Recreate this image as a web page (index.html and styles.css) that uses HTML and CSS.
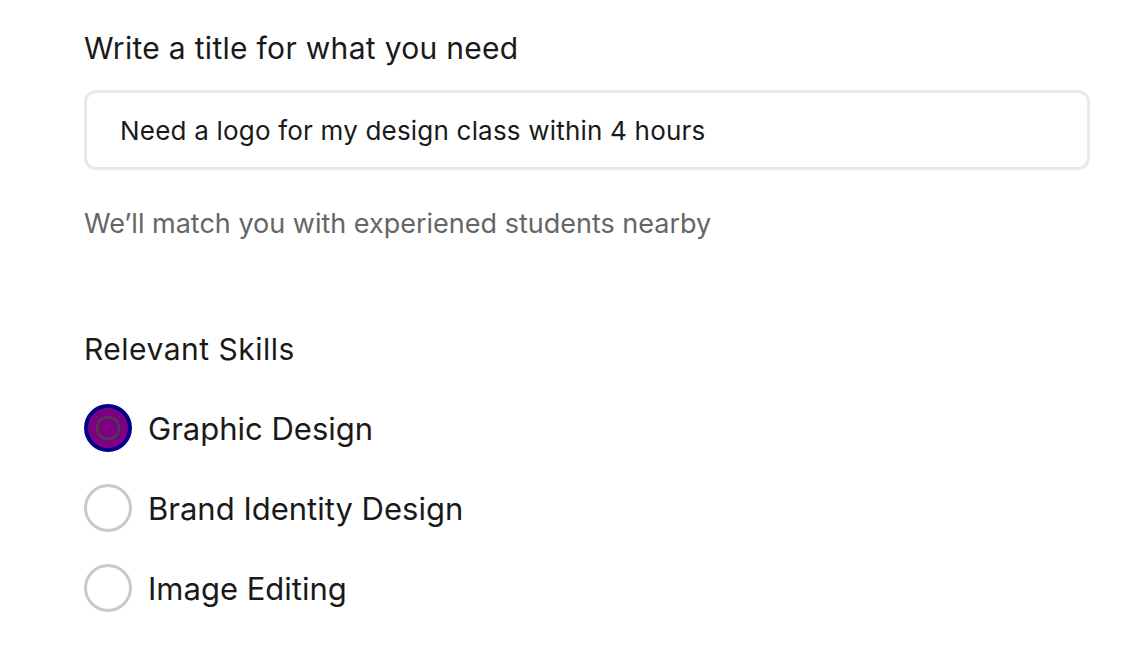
FILE: index.html
```html
<!DOCTYPE html>
<html lang="en">
<head>
    <meta charset="UTF-8">
    <meta name="viewport" content="width=device-width, initial-scale=1.0">
    <title>Post a request</title>
    <link rel="stylesheet" href="styles.css">
</head>
<body>
    <div class="request-form">
        <!-- Title -->
        <h2 class="field-label">Write a title for what you need</h2>
        <input type="text" class="title-input" value="Need a logo for my design class within 4 hours">
        <p class="field-hint">We’ll match you with experiened students nearby</p>

        <!-- Skills -->
        <h2 class="field-label skills-label">Relevant Skills</h2>
        <div class="skill-list">
            <label class="skill-option">
                <span class="radio checked"><span class="radio-dot"></span></span>
                Graphic Design
            </label>
            <label class="skill-option">
                <span class="radio"></span>
                Brand Identity Design
            </label>
            <label class="skill-option">
                <span class="radio"></span>
                Image Editing
            </label>
        </div>
    </div>
</body>
</html>
```

FILE: styles.css
```css
body {
    margin: 0;
    font-family: Inter, 'Liberation Sans', Arial, sans-serif;
    background-color: #fff;
    color: #1a1a1a;
}

.request-form {
    padding: 31px 54px 0 84px;
}

.field-label {
    margin: 0;
    font-size: 30px;
    font-weight: 400;
    line-height: 34px;
    letter-spacing: 0.3px;
}

.title-input {
    display: block;
    width: 100%;
    height: 80px;
    box-sizing: border-box;
    margin-top: 25px;
    padding: 0 33px;
    border: 3px solid #e9e9e9;
    border-radius: 12px;
    font-family: inherit;
    font-size: 26px;
    letter-spacing: 0.2px;
    color: #1a1a1a;
    outline: none;
}

.field-hint {
    margin: 37px 0 0;
    font-size: 27px;
    line-height: 34px;
    color: #666;
}

.skills-label {
    margin-top: 91px;
    letter-spacing: 0.5px;
}

.skill-list {
    display: flex;
    flex-direction: column;
    gap: 32px;
    margin-top: 38px;
}

.skill-option {
    display: flex;
    align-items: center;
    gap: 16px;
    font-size: 31px;
    cursor: pointer;
}

.radio {
    display: flex;
    align-items: center;
    justify-content: center;
    width: 48px;
    height: 48px;
    box-sizing: border-box;
    border: 3px solid #cacaca;
    border-radius: 50%;
    background-color: #fff;
}

.radio.checked {
    border: 4px solid #00008b;
    background-color: #7d0082;
}

.radio-dot {
    width: 24px;
    height: 24px;
    box-sizing: border-box;
    border: 2px solid #444;
    border-radius: 50%;
}
```
